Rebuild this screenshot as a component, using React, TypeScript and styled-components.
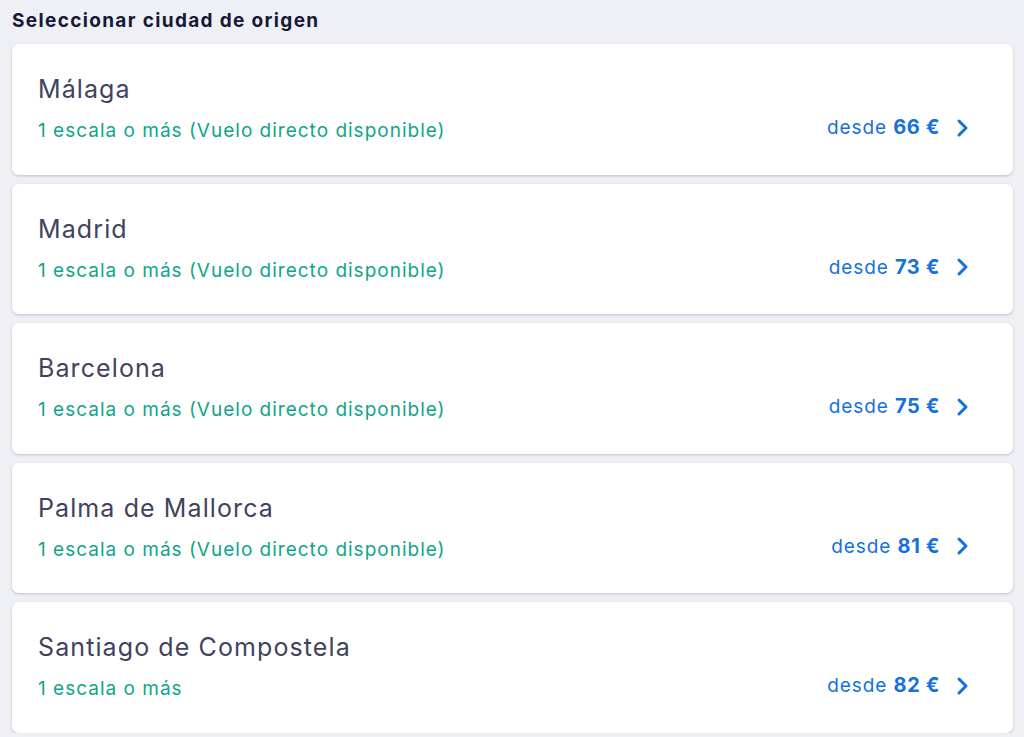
import styled, { createGlobalStyle } from 'styled-components'

const GlobalStyle = createGlobalStyle`
  html, body {
    margin: 0;
    padding: 0;
    background: #eff0f5;
  }
  body {
    font-family: Inter, 'Noto Sans', sans-serif;
  }
`

const Page = styled.div`
  padding: 8px 11px 0 12px;
  display: flex;
  flex-direction: column;
`

const Title = styled.h2`
  margin: 0 0 10px;
  font-size: 19px;
  line-height: 26px;
  font-weight: 700;
  color: #161a36;
  letter-spacing: 1.35px;
`

const List = styled.div`
  display: flex;
  flex-direction: column;
  gap: 9px;
`

const Card = styled.div`
  height: 130.5px;
  box-sizing: border-box;
  background: #ffffff;
  border-radius: 7px;
  box-shadow: 0 1px 3px rgba(30, 35, 70, 0.22);
  padding: 30px 43px 0 26px;
  display: flex;
  align-items: flex-start;
  justify-content: space-between;
  cursor: pointer;
`

const Info = styled.div`
  display: flex;
  flex-direction: column;
  gap: 15px;
`

const City = styled.div`
  font-size: 25px;
  line-height: 30px;
  color: #41435e;
  letter-spacing: 1.1px;
`

const Stops = styled.div`
  font-size: 19px;
  line-height: 24px;
  color: #10a58a;
  letter-spacing: 1px;
`

const Price = styled.div`
  display: flex;
  align-items: center;
  gap: 15px;
  margin-top: 41px;
  color: #1572dc;
  font-size: 19px;
  line-height: 24px;
  letter-spacing: 0.9px;
`

const Amount = styled.b`
  font-weight: 700;
  font-size: 20px;
  letter-spacing: 0.6px;
`

const Chevron = () => (
  <svg width="15" height="20" viewBox="0 0 15 20" fill="none">
    <path d="M4 3l7 7-7 7" stroke="#1572dc" strokeWidth="3" strokeLinecap="round" strokeLinejoin="round" />
  </svg>
)

const origins = [
  { city: 'Málaga', stops: '1 escala o más (Vuelo directo disponible)', price: 66 },
  { city: 'Madrid', stops: '1 escala o más (Vuelo directo disponible)', price: 73 },
  { city: 'Barcelona', stops: '1 escala o más (Vuelo directo disponible)', price: 75 },
  { city: 'Palma de Mallorca', stops: '1 escala o más (Vuelo directo disponible)', price: 81 },
  { city: 'Santiago de Compostela', stops: '1 escala o más', price: 82 },
]

export default function App() {
  return (
    <>
      <GlobalStyle />
      <Page>
        <Title>Seleccionar ciudad de origen</Title>
        <List>
          {origins.map((o) => (
            <Card key={o.city}>
              <Info>
                <City>{o.city}</City>
                <Stops>{o.stops}</Stops>
              </Info>
              <Price>
                <span>
                  desde <Amount>{o.price} €</Amount>
                </span>
                <Chevron />
              </Price>
            </Card>
          ))}
        </List>
      </Page>
    </>
  )
}
